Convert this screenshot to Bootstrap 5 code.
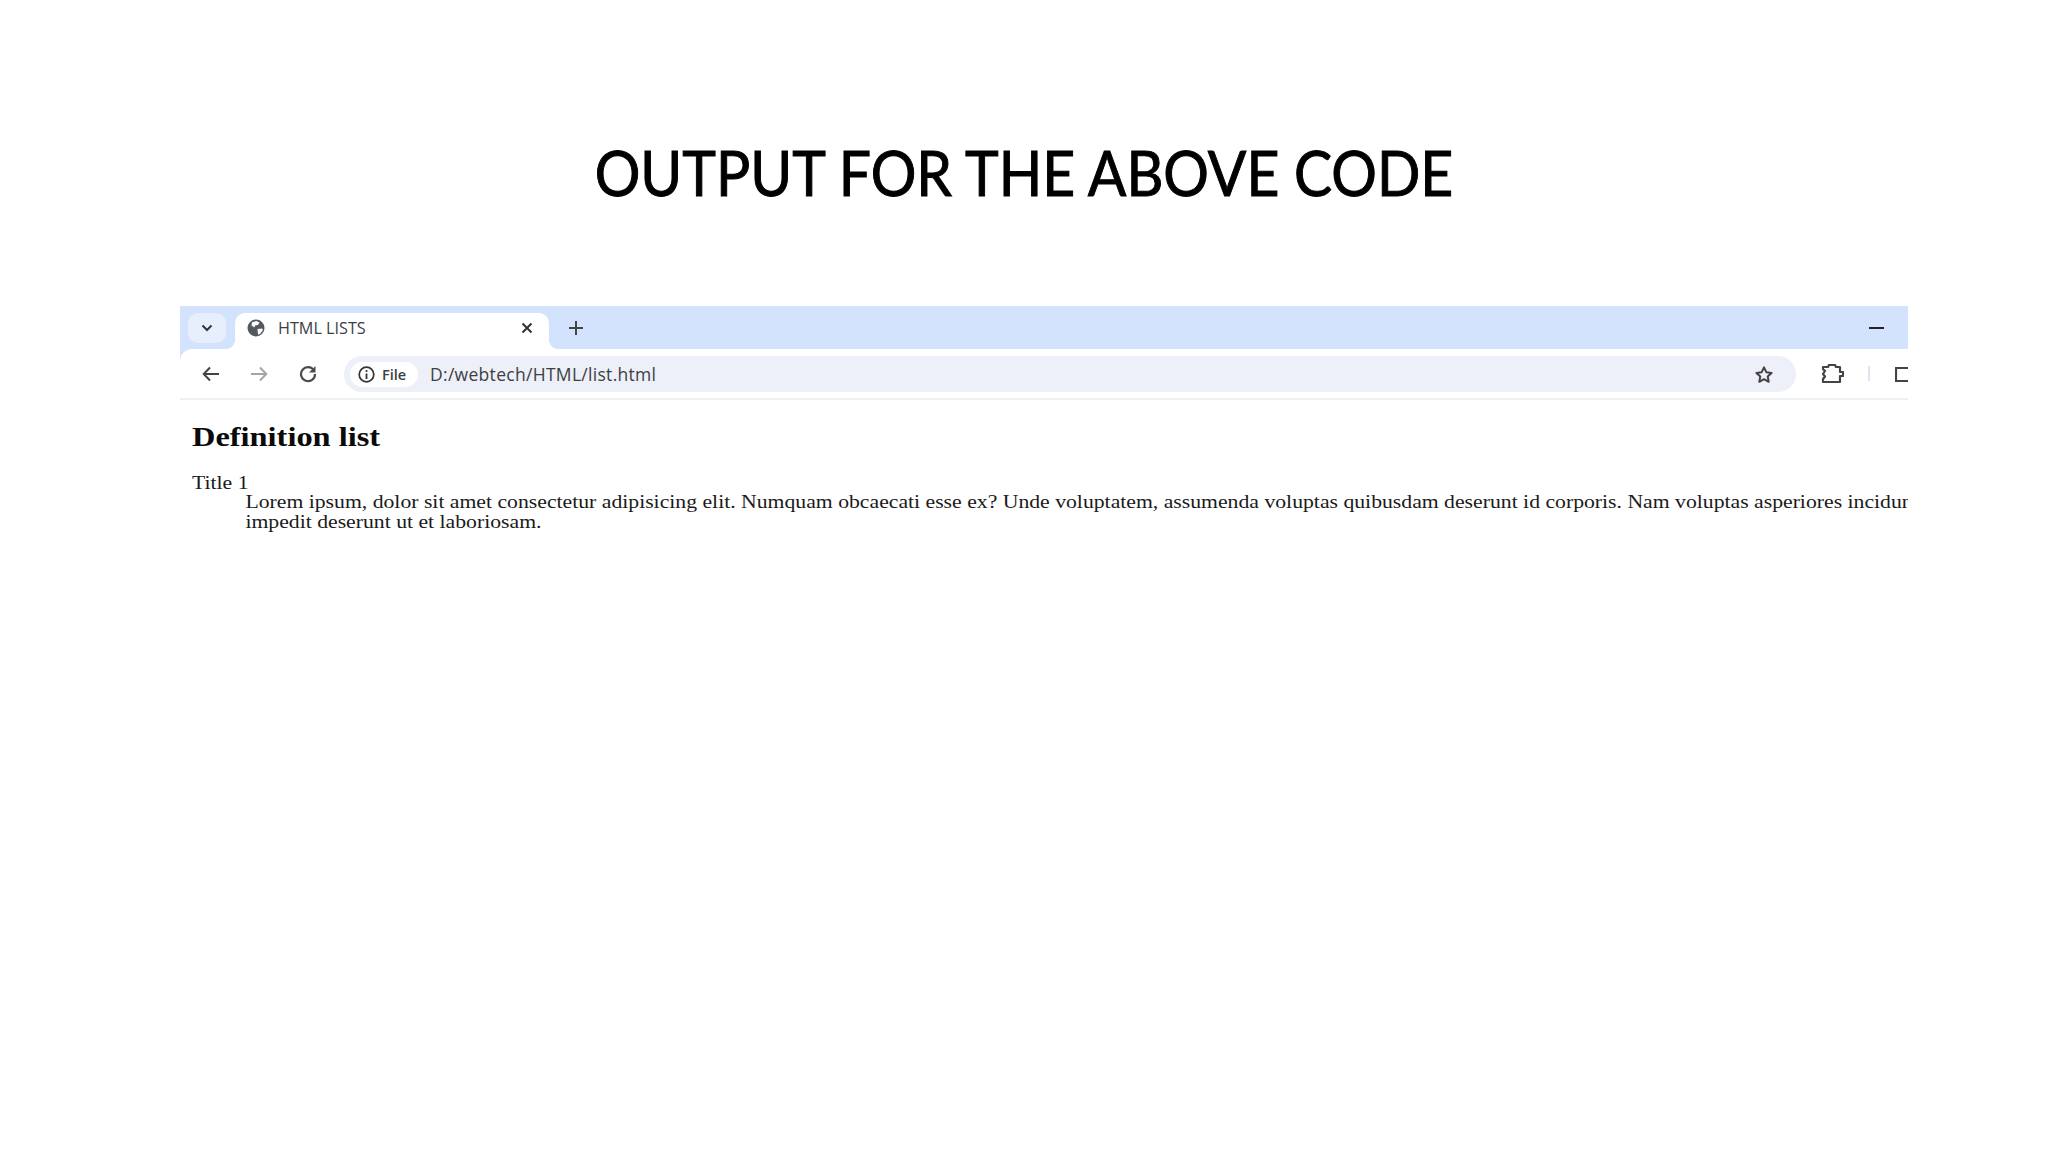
<!doctype html>
<html lang="en">
<head>
<meta charset="utf-8">
<title>Output for the above code</title>
<link href="https://cdn.jsdelivr.net/npm/bootstrap@5.3.0/dist/css/bootstrap.min.css" rel="stylesheet">
<style>
html,body{height:100%;background:#fff}
.slide{height:1152px;overflow:hidden;padding-top:135px}
.slide-title{font-family:Lato,"Open Sans",sans-serif;font-weight:400;font-size:62px;line-height:74px;color:#000;text-align:center;margin:0 0 97px;transform:scaleX(.92);-webkit-text-stroke:1px #000}
.win{width:1728px;margin-left:180px;background:#d3e3fd;overflow:hidden}
.tabbar{height:43px;padding:7px 0 0 8px}
.tab-list{width:38px;height:30px;background:#e7effc;border-radius:10px;color:#333}
.tab-cur{position:relative;width:314px;height:36px;margin-left:9px;background:#fff;border-radius:10px 10px 0 0;padding:0 12px 6px 12px;font:16.200px/30px "Open Sans",sans-serif;color:#3c4043}
.tab-cur::before,.tab-cur::after{content:"";position:absolute;bottom:0;width:10px;height:10px}
.tab-cur::before{left:-10px;background:radial-gradient(circle at 0 0,transparent 10px,#fff 10.500px)}
.tab-cur::after{right:-10px;background:radial-gradient(circle at 100% 0,transparent 10px,#fff 10.500px)}
.tab-label{flex:1;margin-left:13px}
.tab-plus{margin:8px 0 0 20px}
.tab-min{margin:14px 24px 0 auto}
.tool{height:51px;background:#fff;border-top-left-radius:12px;border-bottom:2px solid #eef0f2;padding:7px 0 6px 0}
.omni{width:1452px;height:36px;margin-left:164px;background:#edf0f8;border-radius:18px;padding:0 22px 0 6px;font:17.500px "Open Sans",sans-serif;letter-spacing:.3px;color:#3c4043}
.file-chip{width:68px;height:25px;background:#fff;border-radius:13px;font-size:14.500px;letter-spacing:0;font-weight:600;padding-left:8px;gap:7px;margin-right:12px}
.nav-ic{position:absolute;top:17px}
.nav-back{left:22px}.nav-fwd{left:70px}.nav-rel{left:119px;top:16px}
.nav-ext{left:1641px;top:15px}.nav-sep{left:1688px;top:17px}.nav-sq{left:1715px;top:18px}
.tool-wrap{position:relative}
.page-view{background:#fff;height:200px;padding:22px 0 0 12px;font-family:"Liberation Serif",serif;white-space:nowrap;overflow:hidden}
.stretch{width:1500px;transform:scaleX(1.2);transform-origin:0 0;color:#1a1a1a}
.doc-h{font-family:"Liberation Serif",serif;font-weight:700;font-size:27px;line-height:30px;margin:0 0 21.500px;color:#0a0a0a}
.doc-dl{font-size:18.100px;line-height:19.500px;margin:0}
.doc-dd{margin:0 0 0 44.500px}
.doc-dt{font-weight:400}
</style>
</head>
<body>
<main class="slide">
  <h1 class="slide-title">OUTPUT FOR THE ABOVE CODE</h1>
  <section class="win">
    <div class="tabbar d-flex align-items-start position-relative">
      <div class="tab-list d-flex align-items-center justify-content-center">
        <svg width="12" height="8" viewBox="0 0 12 8"><path d="M1.500 1.500 6 6l4.500-4.500" fill="none" stroke="#333" stroke-width="2"/></svg>
      </div>
      <div class="tab-cur d-flex align-items-center">
        <svg width="18" height="18" viewBox="0 0 18 18"><circle cx="9" cy="9" r="8.500" fill="#55595e"/><path d="M5 3.200 9.500 2l3 1.500-1.500 2.500-3 .5-.5 2-3-2zM10.500 10l4.500-.5 1 1.500-3 4-2 .5z" fill="#fff"/></svg>
        <span class="tab-label">HTML LISTS</span>
        <svg width="12" height="12" viewBox="0 0 12 12" class="me-1"><path d="M1.500 1.500l9 9m0-9-9 9" stroke="#333" stroke-width="2"/></svg>
      </div>
      <svg class="tab-plus" width="14" height="14" viewBox="0 0 14 14"><path d="M7 0v14M0 7h14" stroke="#444" stroke-width="2"/></svg>
      <svg class="tab-min" width="15" height="2" viewBox="0 0 15 2"><path d="M0 1h15" stroke="#222" stroke-width="2"/></svg>
    </div>
    <div class="tool tool-wrap d-flex align-items-center">
      <svg class="nav-ic nav-back" width="18" height="16" viewBox="0 0 18 16"><path d="M17 8H2m6-6.500L1.700 8 8 14.500" fill="none" stroke="#444" stroke-width="2"/></svg>
      <svg class="nav-ic nav-fwd" width="18" height="16" viewBox="0 0 18 16"><path d="M1 8h15M10 1.500 16.300 8 10 14.500" fill="none" stroke="#a3a5a8" stroke-width="2"/></svg>
      <svg class="nav-ic nav-rel" width="18" height="18" viewBox="0 0 18 18"><path d="M15 5.500A7 7 0 1 0 16 9" fill="none" stroke="#4a4d50" stroke-width="2.200"/><path d="M16.500 1v6.500H10z" fill="#4a4d50"/></svg>
      <div class="omni d-flex align-items-center">
        <span class="file-chip d-flex align-items-center">
          <svg width="17" height="17" viewBox="0 0 17 17"><circle cx="8.500" cy="8.500" r="7.300" fill="none" stroke="#333" stroke-width="1.700"/><path d="M8.500 7.500V13" stroke="#333" stroke-width="1.800"/><circle cx="8.500" cy="5" r="1.100" fill="#333"/></svg>File
        </span>
        <span class="flex-grow-1">D:/webtech/HTML/list.html</span>
        <svg width="20" height="19" viewBox="0 0 20 19"><path d="M10 2.300l2.300 4.900 5.300.7-3.900 3.600 1 5.300-4.700-2.600-4.700 2.600 1-5.300L2.400 7.900l5.300-.7z" fill="none" stroke="#444" stroke-width="2" stroke-linejoin="round"/></svg>
      </div>
      <svg class="nav-ic nav-ext" width="23" height="20" viewBox="0 0 23 20"><path d="M2 3h5l1-2h6l1 2h4v5h3v4h-3v6H2v-3l2-2.500L2 10l2-3-2-2z" fill="none" stroke="#444" stroke-width="2.200" stroke-linejoin="round"/></svg>
      <svg class="nav-ic nav-sep" width="2" height="15" viewBox="0 0 2 15"><path d="M1 0v15" stroke="#d5dde8" stroke-width="1.500"/></svg>
      <svg class="nav-ic nav-sq" width="14" height="15" viewBox="0 0 14 15"><path d="M14 1H1v13h13" fill="none" stroke="#444" stroke-width="2.200"/></svg>
    </div>
    <div class="page-view">
      <div class="stretch">
        <h2 class="doc-h">Definition list</h2>
        <dl class="doc-dl">
          <dt class="doc-dt">Title 1</dt>
          <dd class="doc-dd">Lorem ipsum, dolor sit amet consectetur adipisicing elit. Numquam obcaecati esse ex? Unde voluptatem, assumenda voluptas quibusdam deserunt id corporis. Nam voluptas asperiores incidunt<br>impedit deserunt ut et laboriosam.</dd>
        </dl>
      </div>
    </div>
  </section>
</main>
<script src="https://cdn.jsdelivr.net/npm/bootstrap@5.3.0/dist/js/bootstrap.bundle.min.js"></script>
</body>
</html>
